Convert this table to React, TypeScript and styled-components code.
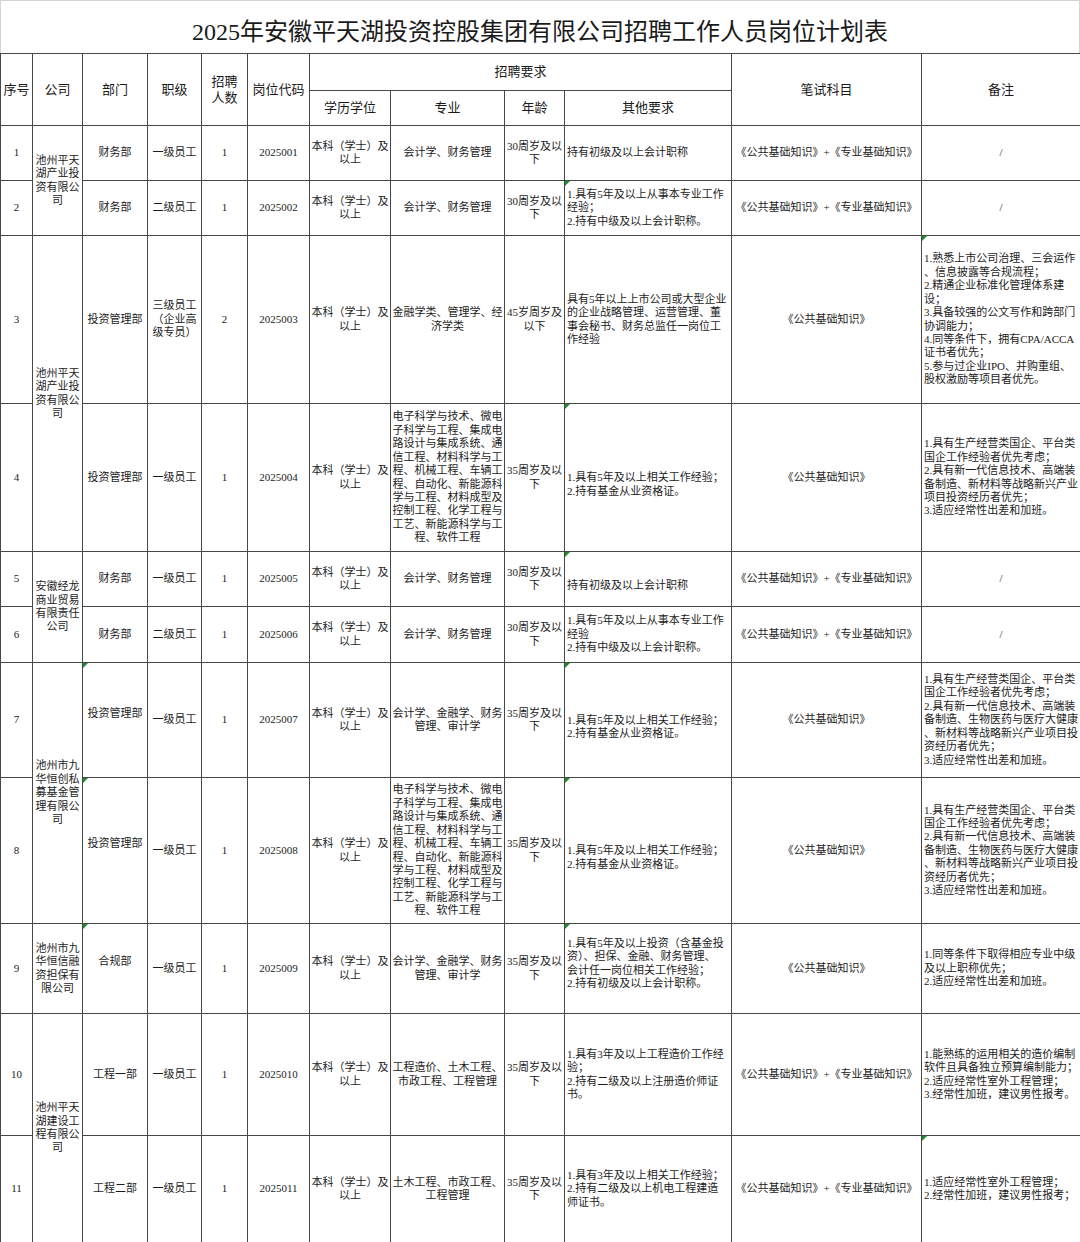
import React from 'react';
import styled, { createGlobalStyle } from 'styled-components';

const GlobalStyle = createGlobalStyle`
  html, body { margin: 0; padding: 0; background: #ffffff; }
  body {
    font-family: "Liberation Serif", "Noto Sans CJK SC", serif;
    color: #1c1c1c;
  }
`;

const Page = styled.div`
  width: 1080px;
`;

const TitleBar = styled.div`
  box-sizing: border-box;
  height: 53px;
  border: 1px solid #d4d4d4;
  border-bottom: none;
  display: flex;
  align-items: center;
  justify-content: center;
  padding-top: 4px;
  font-size: 24px;
  font-family: "Liberation Serif", "Noto Sans CJK SC", serif;
  color: #1a1a1a;
`;

const Sheet = styled.table`
  width: 1080px;
  border-collapse: collapse;
  table-layout: fixed;
`;

const Col = styled.col<{ $w: number }>`
  width: ${(p) => p.$w}px;
`;

const Row = styled.tr<{ $h: number }>`
  height: ${(p) => p.$h}px;
`;

const Head = styled.th`
  border: 1px solid #474747;
  padding: 0 1px;
  font-size: 13px;
  line-height: 16px;
  font-weight: normal;
  text-align: center;
  vertical-align: middle;
  white-space: nowrap;
  color: #1a1a1a;
`;

const Cell = styled.td<{ $align?: 'left' | 'center'; $shift?: number; $note?: boolean }>`
  position: relative;
  border: 1px solid #474747;
  padding: ${(p) => (p.$shift && p.$shift > 0 ? p.$shift * 2 : 0)}px
    ${(p) => (p.$align === 'left' ? 0 : 1)}px
    ${(p) => (p.$shift && p.$shift < 0 ? -p.$shift * 2 : 0)}px
    ${(p) => (p.$align === 'left' ? 2 : 1)}px;
  text-align: ${(p) => p.$align ?? 'center'};
  vertical-align: middle;
  font-size: 11px;
  line-height: 13.4px;
  white-space: nowrap;
  overflow: hidden;
  color: #1c1c1c;

  &::before {
    content: '';
    display: ${(p) => (p.$note ? 'block' : 'none')};
    position: absolute;
    top: 0;
    left: 0;
    width: 0;
    height: 0;
    border-top: 5px solid #1f8a2a;
    border-right: 5px solid transparent;
  }
`;

const Lines = ({ t }: { t: string[] }) => (
  <>
    {t.map((l, i) => (
      <React.Fragment key={i}>
        {i > 0 && <br />}
        {l}
      </React.Fragment>
    ))}
  </>
);

const BOTH = '《公共基础知识》+《专业基础知识》';
const PUB = '《公共基础知识》';
const EDU = ['本科（学士）及', '以上'];
const AGE30 = ['30周岁及以', '下'];
const AGE35 = ['35周岁及以', '下'];
const ENG = [
  '电子科学与技术、微电',
  '子科学与工程、集成电',
  '路设计与集成系统、通',
  '信工程、材料科学与工',
  '程、机械工程、车辆工',
  '程、自动化、新能源科',
  '学与工程、材料成型及',
  '控制工程、化学工程与',
  '工艺、新能源科学与工',
  '程、软件工程',
];
const FUND = ['1.具有5年及以上相关工作经验；', '2.持有基金从业资格证。'];
const R78 = [
  '1.具有生产经营类国企、平台类',
  '国企工作经验者优先考虑；',
  '2.具有新一代信息技术、高端装',
  '备制造、生物医药与医疗大健康',
  '、新材料等战略新兴产业项目投',
  '资经历者优先；',
  '3.适应经常性出差和加班。',
];

type Item = {
  no: string;
  company?: { lines: string[]; span: number };
  dept: string;
  deptShift?: number;
  deptNote?: boolean;
  level: string[];
  count: string;
  code: string;
  major: string[];
  age: string[];
  other: string[];
  otherShift?: number;
  otherNote?: boolean;
  exam: string;
  remark: string[] | null;
  remarkNote?: boolean;
  h: number;
};

const rows: Item[] = [
  {
    no: '1',
    company: { lines: ['池州平天', '湖产业投', '资有限公', '司'], span: 2 },
    dept: '财务部',
    level: ['一级员工'],
    count: '1',
    code: '2025001',
    major: ['会计学、财务管理'],
    age: AGE30,
    other: ['持有初级及以上会计职称'],
    exam: BOTH,
    remark: null,
    h: 55,
  },
  {
    no: '2',
    dept: '财务部',
    level: ['二级员工'],
    count: '1',
    code: '2025002',
    major: ['会计学、财务管理'],
    age: AGE30,
    other: ['1.具有5年及以上从事本专业工作', '经验；', '2.持有中级及以上会计职称。'],
    otherNote: true,
    exam: BOTH,
    remark: null,
    h: 55,
  },
  {
    no: '3',
    company: { lines: ['池州平天', '湖产业投', '资有限公', '司'], span: 2 },
    dept: '投资管理部',
    level: ['三级员工', '（企业高', '级专员）'],
    count: '2',
    code: '2025003',
    major: ['金融学类、管理学、经', '济学类'],
    age: ['45岁周岁及', '以下'],
    other: [
      '具有5年以上上市公司或大型企业',
      '的企业战略管理、运营管理、董',
      '事会秘书、财务总监任一岗位工',
      '作经验',
    ],
    exam: PUB,
    remark: [
      '1.熟悉上市公司治理、三会运作',
      '、信息披露等合规流程；',
      '2.精通企业标准化管理体系建',
      '设；',
      '3.具备较强的公文写作和跨部门',
      '协调能力；',
      '4.同等条件下，拥有CPA/ACCA',
      '证书者优先；',
      '5.参与过企业IPO、并购重组、',
      '股权激励等项目者优先。',
    ],
    remarkNote: true,
    h: 168,
  },
  {
    no: '4',
    dept: '投资管理部',
    level: ['一级员工'],
    count: '1',
    code: '2025004',
    major: ENG,
    age: AGE35,
    other: FUND,
    otherShift: 7,
    otherNote: true,
    exam: PUB,
    remark: [
      '1.具有生产经营类国企、平台类',
      '国企工作经验者优先考虑；',
      '2.具有新一代信息技术、高端装',
      '备制造、新材料等战略新兴产业',
      '项目投资经历者优先；',
      '3.适应经常性出差和加班。',
    ],
    h: 148,
  },
  {
    no: '5',
    company: { lines: ['安徽经龙', '商业贸易', '有限责任', '公司'], span: 2 },
    dept: '财务部',
    level: ['一级员工'],
    count: '1',
    code: '2025005',
    major: ['会计学、财务管理'],
    age: AGE30,
    other: ['持有初级及以上会计职称'],
    otherShift: 7,
    otherNote: true,
    exam: BOTH,
    remark: null,
    h: 55,
  },
  {
    no: '6',
    dept: '财务部',
    level: ['二级员工'],
    count: '1',
    code: '2025006',
    major: ['会计学、财务管理'],
    age: AGE30,
    other: ['1.具有5年及以上从事本专业工作', '经验', '2.持有中级及以上会计职称。'],
    exam: BOTH,
    remark: null,
    h: 56,
  },
  {
    no: '7',
    company: { lines: ['池州市九', '华恒创私', '募基金管', '理有限公', '司'], span: 2 },
    dept: '投资管理部',
    deptShift: -6,
    deptNote: true,
    level: ['一级员工'],
    count: '1',
    code: '2025007',
    major: ['会计学、金融学、财务', '管理、审计学'],
    age: AGE35,
    other: FUND,
    otherShift: 7,
    otherNote: true,
    exam: PUB,
    remark: R78,
    h: 115,
  },
  {
    no: '8',
    dept: '投资管理部',
    deptShift: -7,
    deptNote: true,
    level: ['一级员工'],
    count: '1',
    code: '2025008',
    major: ENG,
    age: AGE35,
    other: FUND,
    otherShift: 7,
    otherNote: true,
    exam: PUB,
    remark: R78,
    h: 146,
  },
  {
    no: '9',
    company: { lines: ['池州市九', '华恒信融', '资担保有', '限公司'], span: 1 },
    dept: '合规部',
    deptShift: -7,
    deptNote: true,
    level: ['一级员工'],
    count: '1',
    code: '2025009',
    major: ['会计学、金融学、财务', '管理、审计学'],
    age: AGE35,
    other: [
      '1.具有5年及以上投资（含基金投',
      '资）、担保、金融、财务管理、',
      '会计任一岗位相关工作经验；',
      '2.持有初级及以上会计职称。',
    ],
    otherShift: -5,
    otherNote: true,
    exam: PUB,
    remark: ['1.同等条件下取得相应专业中级', '及以上职称优先；', '2.适应经常性出差和加班。'],
    h: 90,
  },
  {
    no: '10',
    company: { lines: ['池州平天', '湖建设工', '程有限公', '司'], span: 2 },
    dept: '工程一部',
    level: ['一级员工'],
    count: '1',
    code: '2025010',
    major: ['工程造价、土木工程、', '市政工程、工程管理'],
    age: AGE35,
    other: ['1.具有3年及以上工程造价工作经', '验；', '2.持有二级及以上注册造价师证', '书。'],
    exam: BOTH,
    remark: [
      '1.能熟练的运用相关的造价编制',
      '软件且具备独立预算编制能力；',
      '2.适应经常性室外工程管理；',
      '3.经常性加班，建议男性报考。',
    ],
    h: 122,
  },
  {
    no: '11',
    dept: '工程二部',
    level: ['一级员工'],
    count: '1',
    code: '2025011',
    major: ['土木工程、市政工程、', '工程管理'],
    age: AGE35,
    other: ['1.具有3年及以上相关工作经验；', '2.持有二级及以上机电工程建造', '师证书。'],
    exam: BOTH,
    remark: ['1.适应经常性室外工程管理；', '2.经常性加班，建议男性报考；'],
    remarkNote: true,
    h: 107,
  },
];

const widths = [32, 50, 65, 54, 46, 62, 81, 114, 60, 167, 190, 159];

export default function App() {
  return (
    <Page>
      <GlobalStyle />
      <TitleBar>2025年安徽平天湖投资控股集团有限公司招聘工作人员岗位计划表</TitleBar>
      <Sheet>
        <colgroup>
          {widths.map((w, i) => (
            <Col key={i} $w={w} />
          ))}
        </colgroup>
        <thead>
          <Row $h={37}>
            <Head rowSpan={2}>序号</Head>
            <Head rowSpan={2}>公司</Head>
            <Head rowSpan={2}>部门</Head>
            <Head rowSpan={2}>职级</Head>
            <Head rowSpan={2}>
              招聘
              <br />
              人数
            </Head>
            <Head rowSpan={2}>岗位代码</Head>
            <Head colSpan={4}>招聘要求</Head>
            <Head rowSpan={2}>笔试科目</Head>
            <Head rowSpan={2}>备注</Head>
          </Row>
          <Row $h={35}>
            <Head>学历学位</Head>
            <Head>专业</Head>
            <Head>年龄</Head>
            <Head>其他要求</Head>
          </Row>
        </thead>
        <tbody>
          {rows.map((r) => (
            <Row key={r.no} $h={r.h}>
              <Cell>{r.no}</Cell>
              {r.company && (
                <Cell rowSpan={r.company.span}>
                  <Lines t={r.company.lines} />
                </Cell>
              )}
              <Cell $shift={r.deptShift} $note={r.deptNote}>
                {r.dept}
              </Cell>
              <Cell>
                <Lines t={r.level} />
              </Cell>
              <Cell>{r.count}</Cell>
              <Cell>{r.code}</Cell>
              <Cell>
                <Lines t={EDU} />
              </Cell>
              <Cell>
                <Lines t={r.major} />
              </Cell>
              <Cell>
                <Lines t={r.age} />
              </Cell>
              <Cell $align="left" $shift={r.otherShift} $note={r.otherNote}>
                <Lines t={r.other} />
              </Cell>
              <Cell>{r.exam}</Cell>
              {r.remark ? (
                <Cell $align="left" $note={r.remarkNote}>
                  <Lines t={r.remark} />
                </Cell>
              ) : (
                <Cell $note={r.remarkNote}>/</Cell>
              )}
            </Row>
          ))}
        </tbody>
      </Sheet>
    </Page>
  );
}
